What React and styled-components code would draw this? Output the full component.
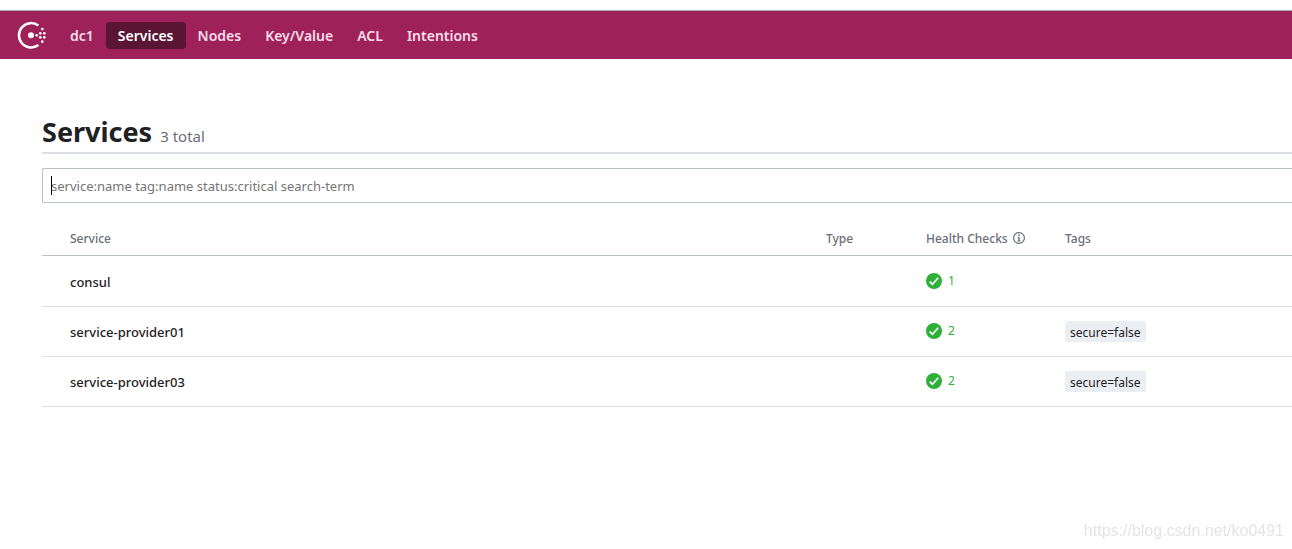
import React from 'react';
import styled, { createGlobalStyle } from 'styled-components';

const GlobalStyle = createGlobalStyle`
    * {
      box-sizing: border-box;
    }
    body {
      margin: 0;
      background: #fff;
      color: #1f2124;
      font-family: "Noto Sans", "Open Sans", sans-serif;
      font-size: 13px;
    }
`
const Page = styled.div`
    padding-top: 10px;
`
const Header = styled.header`
    display: flex;
    align-items: center;
    height: 49px;
    padding-left: 17px;
    background: #9e2159;
    border-top: 1px solid #a9a9a9;
`
const LogoLink = styled.a`
    display: flex;
    margin-right: 12px;
`
const Nav = styled.nav`
    display: flex;
`
const NavLink = styled.a`
    padding: 0 12px;
    border-radius: 4px;
    background: ${(props) => (props.$active ? '#5a1434' : 'transparent')};
    color: ${(props) => (props.$active ? '#fff' : '#fadeea')};
    font-size: 14px;
    font-weight: 600;
    line-height: 27px;
    text-decoration: none;
`
const Main = styled.main`
    padding: 53px 0 0 42px;
`
const TitleBar = styled.div`
    display: flex;
    align-items: baseline;
    gap: 8px;
    height: 42px;
    border-bottom: 2px solid #dcdee5;
`
const Title = styled.h1`
    margin: 0;
    font-size: 27px;
    font-weight: 700;
    line-height: 40px;
`
const Total = styled.span`
    color: #6a6e78;
    font-size: 15px;
`
const SearchField = styled.div`
    position: relative;
    margin-top: 14px;
`
const SearchInput = styled.input`
    display: block;
    width: 100%;
    height: 35px;
    padding: 0 8px;
    border: 1px solid #bac1cc;
    border-right: 0;
    border-radius: 2px 0 0 2px;
    outline: none;
    color: #1f2124;
    caret-color: transparent;
    font-family: inherit;
    font-size: 13px;
    &::placeholder {
      color: #757575;
      opacity: 1;
    }
`
const Caret = styled.span`
    position: absolute;
    top: 8px;
    left: 9px;
    width: 1px;
    height: 19px;
    background: #000;
`
const StyledTable = styled.table`
    width: 100%;
    border-collapse: separate;
    border-spacing: 0;
    table-layout: fixed;
`
const HeadCell = styled.th`
    width: ${(props) => props.$width || 'auto'};
    height: 53px;
    padding: 18px 0 0 ${(props) => (props.$first ? '28px' : '0')};
    border-bottom: 1px solid #bac1cc;
    color: #6a6e78;
    font-size: 12px;
    font-weight: 500;
    text-align: left;
`
const HeadLabel = styled.span`
    display: flex;
    align-items: center;
    gap: 5px;
`
const Cell = styled.td`
    height: 50px;
    padding: 0;
    border-bottom: 1px solid #dcdee5;
    tr:first-child > & {
      height: 51px;
      padding-top: 1px;
    }
`
const NameCell = styled(Cell)`
    padding-left: 28px;
`
const HealthCell = styled(Cell)`
    padding-bottom: 2px;
`
const NameLink = styled.a`
    color: #1f2124;
    font-weight: 500;
    text-decoration: none;
`
const Passing = styled.span`
    display: flex;
    align-items: center;
    gap: 6px;
    color: #2eb039;
    font-size: 12px;
    line-height: 16px;
`
const Tag = styled.span`
    display: inline-block;
    padding: 2px 5px 0;
    border-radius: 2px;
    background: #ebeef2;
    font-size: 12px;
    line-height: 19px;
`
const Watermark = styled.div`
    position: fixed;
    right: 8px;
    bottom: 8px;
    color: #e4e4e4;
    font-family: "Liberation Sans", Arial, sans-serif;
    font-size: 16px;
    line-height: 20px;
`

const navItems = ['dc1', 'Services', 'Nodes', 'Key/Value', 'ACL', 'Intentions'];

const services = [
  { name: 'consul', passing: 1, tags: [] },
  { name: 'service-provider01', passing: 2, tags: ['secure=false'] },
  { name: 'service-provider03', passing: 2, tags: ['secure=false'] },
];

const logoDots = [
  [19.7, 14.3], [23.3, 12.3], [27.3, 12.3], [23.3, 16.3], [27.3, 16.3], [25.3, 8], [25.3, 20.7],
];

const Logo = () => (
  <svg width="29" height="28" viewBox="0 0 29 28" aria-hidden="true">
    <path d="M21.4 4.5A12.2 12.2 0 1 0 21.4 24.1" fill="none" stroke="#fff" strokeWidth="2.5" />
    <circle cx="14" cy="14.3" r="3" fill="#fff" />
    {logoDots.map(([x, y]) => (
      <circle key={`${x}-${y}`} cx={x} cy={y} r="1.35" fill="#fff" />
    ))}
  </svg>
);

const InfoIcon = () => (
  <svg width="12" height="12" viewBox="0 0 12 12" aria-hidden="true">
    <circle cx="6" cy="6" r="5.4" fill="none" stroke="#6a6e78" strokeWidth="1.2" />
    <path d="M5.2 2.6h1.6v1.4H5.2zM4.6 5h2.1v3.4h.8v1H4.5v-1h.8V6h-.7z" fill="#6a6e78" />
  </svg>
);

const PassingIcon = () => (
  <svg width="16" height="16" viewBox="0 0 16 16" aria-hidden="true">
    <circle cx="8" cy="8" r="8" fill="#2eb039" />
    <path d="M3.7 8.6l2.7 2.6 5.8-6.4" fill="none" stroke="#fff" strokeWidth="1.7" />
  </svg>
);

const renderRow = (service) => (
  <tr key={service.name}>
    <NameCell>
      <NameLink href={`#${service.name}`}>{service.name}</NameLink>
    </NameCell>
    <Cell />
    <HealthCell>
      <Passing>
        <PassingIcon />
        {service.passing}
      </Passing>
    </HealthCell>
    <Cell>
      {service.tags.map((tag) => <Tag key={tag}>{tag}</Tag>)}
    </Cell>
  </tr>
);

const App = () => {
  return (
    <Page>
      <GlobalStyle />
      <Header>
        <LogoLink href="#home" aria-label="Consul">
          <Logo />
        </LogoLink>
        <Nav>
          {navItems.map((item) => (
            <NavLink key={item} href={`#${item}`} $active={item === 'Services'}>{item}</NavLink>
          ))}
        </Nav>
      </Header>
      <Main>
        <TitleBar>
          <Title>Services</Title>
          <Total>{services.length} total</Total>
        </TitleBar>
        <SearchField>
          <SearchInput
            type="text"
            aria-label="Search"
            placeholder="service:name tag:name status:critical search-term"
          />
          <Caret />
        </SearchField>
        <StyledTable>
          <thead>
            <tr>
              <HeadCell $first>Service</HeadCell>
              <HeadCell $width="100px">Type</HeadCell>
              <HeadCell $width="139px">
                <HeadLabel>
                  Health Checks
                  <InfoIcon />
                </HeadLabel>
              </HeadCell>
              <HeadCell $width="227px">Tags</HeadCell>
            </tr>
          </thead>
          <tbody>{services.map(renderRow)}</tbody>
        </StyledTable>
      </Main>
      <Watermark>https://blog.csdn.net/ko0491</Watermark>
    </Page>
  );
};

export default App;
